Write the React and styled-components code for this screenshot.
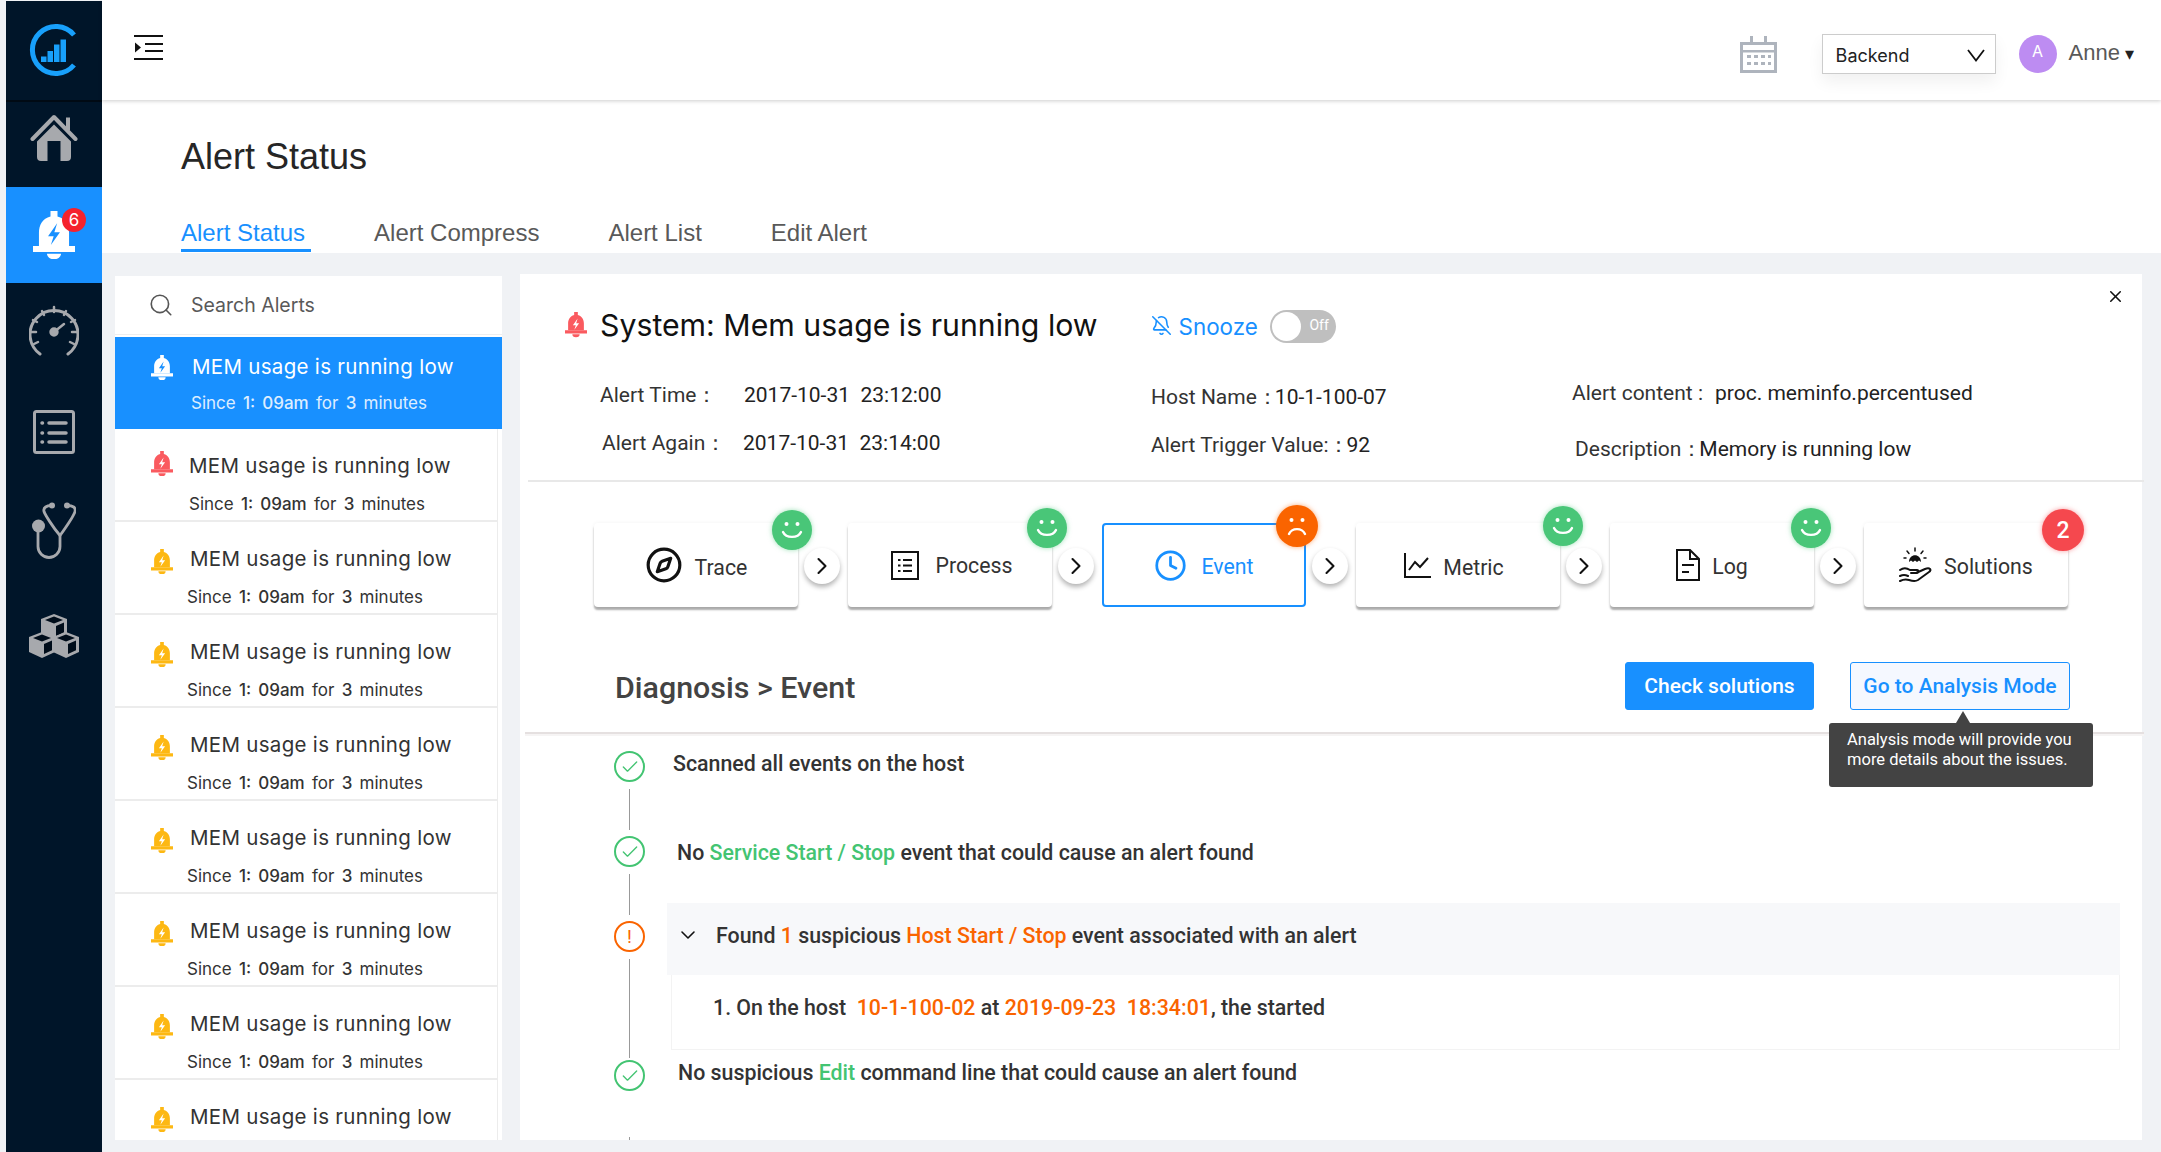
import React from 'react';
import styled, { createGlobalStyle } from 'styled-components';
import { BellOff, Check, ChevronDown, ChevronRight, Clock, Compass, Search, X } from 'lucide-react';

const GlobalStyle = createGlobalStyle`
  html, body { margin: 0; padding: 0; background: #f0f2f5; }
  * { box-sizing: border-box; }
  #root { width: 2161px; height: 1152px; overflow: hidden; }
`;

const Page = styled.div`
  display: flex;
  width: 2161px;
  height: 1152px;
  padding: 1px 0 0 6px;
  background: #f0f2f5;
  font-family: Roboto, "Liberation Sans", sans-serif;
  color: #333;
  overflow: hidden;
`;

const Sidebar = styled.nav`
  display: flex;
  flex-direction: column;
  flex: none;
  width: 96px;
  background: #001529;
`;

const LogoCell = styled.div`
  display: flex;
  align-items: center;
  justify-content: center;
  height: 101px;
  padding: 0 2px 2px 0;
  border-bottom: 2px solid #000a14;
`;

const NavCell = styled.div`
  position: relative;
  display: flex;
  align-items: center;
  justify-content: center;
  height: ${(p) => p.$h}px;
  padding-bottom: ${(p) => p.$pb || 0}px;
  background: ${(p) => (p.$active ? '#1890ff' : 'transparent')};
`;

const NavBadge = styled.span`
  position: absolute;
  top: 21px;
  left: 56px;
  display: flex;
  align-items: center;
  justify-content: center;
  width: 24px;
  height: 24px;
  border-radius: 50%;
  background: #f5222d;
  color: #fff;
  font-size: 17px;
  font-family: Inter, sans-serif;
`;

const Main = styled.div`
  display: flex;
  flex-direction: column;
  flex: 1;
  min-width: 0;
  margin-top: -1px;
`;

const Header = styled.header`
  position: relative;
  z-index: 2;
  display: flex;
  align-items: center;
  flex: none;
  height: 100px;
  padding: 0 27px 6px 32px;
  background: #fff;
  box-shadow: 0 1px 4px rgba(0, 0, 0, 0.2);
`;

const HeaderRight = styled.div`
  display: flex;
  align-items: center;
  margin: 14px 0 0 auto;
`;

const Select = styled.div`
  display: flex;
  align-items: center;
  justify-content: space-between;
  width: 174px;
  height: 40px;
  margin-left: 45px;
  padding: 3px 10px 0 13px;
  border: 1px solid #ccc;
  background: #fff;
  box-shadow: 0 8px 16px rgba(0, 0, 0, 0.06);
  color: #222;
  font-family: Inter, sans-serif;
  font-size: 18px;
`;

const Avatar = styled.div`
  display: flex;
  align-items: center;
  justify-content: center;
  width: 38px;
  height: 38px;
  margin-left: 23px;
  padding-bottom: 6px;
  border-radius: 50%;
  background: #bd8cf2;
  color: #fff;
  font-family: Inter, sans-serif;
  font-size: 16px;
`;

const UserName = styled.div`
  margin: -2px 0 0 12px;
  color: #595959;
  font-family: "Liberation Sans", sans-serif;
  font-size: 22px;
`;

const Caret = styled.span`
  margin: -2px 0 0 5px;
  color: #222;
  font-size: 18px;
`;

const PageHead = styled.div`
  flex: none;
  height: 153px;
  padding: 35px 0 0 79px;
  background: #fff;
`;

const PageTitle = styled.h1`
  margin: 0;
  color: #262626;
  font-family: "Liberation Sans", sans-serif;
  font-size: 36px;
  font-weight: 400;
  line-height: 44px;
`;

const Tabs = styled.div`
  display: flex;
  gap: 63px;
  margin-top: 38px;
`;

const Tab = styled.div`
  height: 35px;
  padding-right: 6px;
  border-bottom: 3px solid ${(p) => (p.$active ? '#1890ff' : 'transparent')};
  color: ${(p) => (p.$active ? '#1890ff' : '#595959')};
  font-family: "Liberation Sans", sans-serif;
  font-size: 24px;
  line-height: 32px;
`;

const Content = styled.div`
  display: flex;
  flex: 1;
  min-height: 0;
  gap: 18px;
  padding: 21px 19px 12px 13px;
`;

const ListPanel = styled.aside`
  display: flex;
  flex-direction: column;
  flex: none;
  width: 387px;
  margin-top: 2px;
  background: #fff;
  overflow: hidden;
`;

const SearchBox = styled.div`
  display: flex;
  align-items: center;
  flex: none;
  height: 58px;
  margin-bottom: 3px;
  padding: 0 0 0 33px;
  box-shadow: 0 1px 0 #eee;
  color: #595959;
  font-family: Inter, sans-serif;
  font-size: 19.5px;
`;

const SearchLabel = styled.span`
  margin: 0 0 0 17px;
`;

const Item = styled.div`
  display: grid;
  grid-template-columns: 22px 1fr;
  flex: none;
  height: ${(p) => (p.$active ? 92 : 93)}px;
  margin-right: ${(p) => (p.$active ? 0 : 4)}px;
  padding: ${(p) => (p.$active ? 16 : 23)}px 0 0 36px;
  background: ${(p) => (p.$active ? '#1890ff' : '#fff')};
  border-right: ${(p) => (p.$active ? 'none' : '1px solid #ececec')};
  border-bottom: ${(p) => (p.$active ? 'none' : '2px solid #ececec')};
  color: ${(p) => (p.$active ? '#fff' : '#333')};
  font-family: Inter, sans-serif;
`;

const ItemIcon = styled.div`
  margin-top: ${(p) => p.$top}px;
`;

const ItemTitle = styled.div`
  margin-left: ${(p) => p.$x}px;
  font-size: 20.5px;
  line-height: 28px;
  letter-spacing: 0.3px;
  white-space: nowrap;
`;

const ItemSub = styled.div`
  margin: ${(p) => (p.$active ? 10 : 12)}px 0 0 ${(p) => p.$x}px;
  font-size: 17px;
  line-height: 24px;
  word-spacing: 2.5px;
  white-space: nowrap;
  opacity: ${(p) => (p.$active ? 0.85 : 1)};

  b {
    font-weight: 500;
  }
`;

const Panel = styled.section`
  position: relative;
  flex: 1;
  min-width: 0;
  background: #fff;
`;

const CloseBtn = styled.div`
  position: absolute;
  top: 13px;
  right: 17px;
  color: #111;
`;

const Summary = styled.div`
  height: 208px;
  margin: 0 -2px 0 8px;
  padding: 31px 0 0 37px;
  border-bottom: 2px solid #e8e8e8;
`;

const TitleRow = styled.div`
  display: flex;
  align-items: center;
  height: 40px;
`;

const AlertTitle = styled.h2`
  margin: 0 53px 0 13px;
  color: #111;
  font-family: Inter, sans-serif;
  font-size: 30.25px;
  font-weight: 400;
  white-space: nowrap;
`;

const Snooze = styled.span`
  margin: 3px 12px 0 7px;
  color: #1890ff;
  font-family: Inter, sans-serif;
  font-size: 22.4px;
`;

const Toggle = styled.div`
  position: relative;
  width: 66px;
  height: 33px;
  margin-top: 3px;
  padding: 7px 7px 0 0;
  border-radius: 17px;
  background: #bfbfbf;
  color: #fff;
  font-size: 14px;
  text-align: right;

  &::before {
    content: '';
    position: absolute;
    top: 2px;
    left: 2px;
    width: 29px;
    height: 29px;
    border-radius: 50%;
    background: #fff;
  }
`;

const Details = styled.div`
  display: flex;
  margin: 35px 0 0 35px;
`;

const DetailCol = styled.div`
  display: flex;
  flex-direction: column;
  gap: ${(p) => p.$gap}px;
  width: ${(p) => p.$w}px;
  margin-top: ${(p) => p.$top}px;
  font-size: 21px;
  line-height: 30px;
  white-space: nowrap;
  color: #222;
`;

const DetailRow = styled.div`
  display: flex;
  margin-left: ${(p) => p.$x || 0}px;
`;

const DetailLabel = styled.span`
  flex: none;
  width: ${(p) => (p.$w ? `${p.$w}px` : 'auto')};
  margin-right: ${(p) => (p.$w ? 0 : -3)}px;
  color: #333;
`;

const Steps = styled.div`
  display: flex;
  margin: 41px 0 0 74px;
`;

const StepCard = styled.div`
  position: relative;
  display: flex;
  align-items: center;
  justify-content: center;
  gap: ${(p) => p.$gap || 12}px;
  flex: none;
  width: 204px;
  height: 84px;
  padding: 0 ${(p) => p.$shift || 0}px 0 ${(p) => p.$push || 0}px;
  border: ${(p) => (p.$active ? '2px solid #1890ff' : 'none')};
  border-radius: 4px;
  background: #fff;
  box-shadow: ${(p) => (p.$active ? 'none' : '0 3px 2px rgba(0, 0, 0, 0.32), 0 0 4px rgba(0, 0, 0, 0.05)')};
  color: ${(p) => (p.$active ? '#1890ff' : '#333')};
  font-size: 21.3px;
`;

const StepLabel = styled.span`
  margin-top: ${(p) => p.$top}px;
`;

const StepBadge = styled.div`
  position: absolute;
  top: ${(p) => p.$top}px;
  right: ${(p) => p.$right}px;
  display: flex;
  align-items: center;
  justify-content: center;
  width: ${(p) => p.$size}px;
  height: ${(p) => p.$size}px;
  border-radius: 50%;
  background: ${(p) => p.$color};
  box-shadow: 0 0 5px ${(p) => p.$color}88;
  color: #fff;
  font-size: 23px;
  font-weight: 500;
`;

const Arrow = styled.div`
  display: flex;
  align-items: center;
  justify-content: center;
  flex: none;
  width: 36px;
  height: 36px;
  margin: 25px 8px 0 6px;
  border-radius: 50%;
  background: #fff;
  box-shadow: 0 3px 5px rgba(0, 0, 0, 0.3);
  color: #111;
  z-index: 1;
`;

const DiagRow = styled.div`
  display: flex;
  align-items: center;
  height: 71px;
  margin: 56px -2px 0 5px;
  padding: 0 74px 23px 90px;
  border-bottom: 2px solid #e5e0e0;
  box-shadow: 0 2px 0 #f6f4f4;
`;

const DiagTitle = styled.h3`
  margin: 2px auto 0 0;
  color: #434343;
  font-size: 30.4px;
  font-weight: 500;
`;

const Button = styled.div`
  position: relative;
  display: flex;
  align-items: center;
  justify-content: center;
  width: ${(p) => p.$w}px;
  height: 48px;
  margin-left: ${(p) => p.$ml}px;
  border: 1px solid #1890ff;
  border-radius: 3px;
  background: ${(p) => (p.$primary ? '#1890ff' : '#f5f8ff')};
  color: ${(p) => (p.$primary ? '#fff' : '#1890ff')};
  font-size: 21px;
  font-weight: 500;
  white-space: nowrap;
`;

const Tooltip = styled.div`
  position: absolute;
  top: 60px;
  left: -22px;
  z-index: 3;
  width: 264px;
  height: 64px;
  padding: 7px 0 0 18px;
  border-radius: 3px;
  background: #434343;
  color: #fff;
  font-size: 16.5px;
  font-weight: 400;
  line-height: 19.5px;

  &::before {
    content: '';
    position: absolute;
    top: -12px;
    left: 127px;
    border-left: 7px solid transparent;
    border-right: 7px solid transparent;
    border-bottom: 12px solid #434343;
  }
`;

const Timeline = styled.div`
  margin: 17px 22px 0 94px;
`;

const Step = styled.div`
  display: flex;
  height: ${(p) => p.$h}px;
`;

const Rail = styled.div`
  display: flex;
  flex-direction: column;
  align-items: center;
  flex: none;
  width: 31px;
`;

const Connector = styled.div`
  width: 1px;
  height: ${(p) => p.$h}px;
  margin-top: ${(p) => p.$gap || 7}px;
  background: #999;
`;

const StatusRing = styled.div`
  display: flex;
  align-items: center;
  justify-content: center;
  flex: none;
  width: 31px;
  height: 31px;
  border: 2px solid ${(p) => p.$color};
  border-radius: 50%;
  color: ${(p) => p.$color};
  font-size: 19px;
`;

const StepText = styled.div`
  margin: ${(p) => p.$top}px 0 0 ${(p) => p.$x}px;
  color: #333;
  font-size: 21.35px;
  font-weight: 500;
  line-height: 26px;
  white-space: nowrap;
`;

const Green = styled.span`
  color: #43c472;
`;

const Orange = styled.span`
  color: #fa6400;
`;

const Expand = styled.div`
  flex: 1;
  margin: -18px 0 0 22px;
`;

const ExpandHead = styled.div`
  display: flex;
  align-items: center;
  height: 72px;
  padding: 0 0 8px 9px;
  background: #f7f8fa;
  font-size: 21.35px;
  font-weight: 500;
  white-space: nowrap;
`;

const ExpandHeadText = styled.span`
  margin-left: 16px;
`;

const ExpandBody = styled.div`
  height: 75px;
  margin-left: 4px;
  padding: 20px 0 0 41px;
  border: 1px solid #f3f3f3;
  border-top: none;
  font-size: 21.35px;
  font-weight: 500;
  line-height: 26px;
  white-space: nowrap;
`;

const Logo = () => (
  <svg width="52" height="54" viewBox="0 0 52 54" fill="none">
    <path d="M47 12A23.500 23.500 0 1 0 47 42" stroke="#18a0fb" strokeWidth="5" />
    <path d="M14 33.500h5.500V39H14zM20.500 28H26v11h-5.500zM27 21.500h5.500V39H27zM33.500 16.500H39V39h-5.500z" fill="#18a0fb" />
  </svg>
);

const HomeIcon = () => (
  <svg width="48" height="48" viewBox="0 0 48 48" fill="#a7a9ad">
    <path d="M2.500 25L24 3l21.500 22" fill="none" stroke="#a7a9ad" strokeWidth="4" strokeLinecap="round" strokeLinejoin="round" />
    <path d="M36 3.500h4V16h-4z" />
    <path d="M24 10.500L7 27.500V43a4 4 0 0 0 4 4h6.500V27h13v20H37a4 4 0 0 0 4-4V27.500z" />
  </svg>
);

const BellIcon = ({ size = 24, color = '#fff', bolt = '#1890ff' }) => (
  <svg width={size} height={size * 1.15} viewBox="0 0 24 27.6">
    <path d="M10 0h4v3.200c4.600 1.200 6.600 5 6.600 9.300V20H3.400v-7.500C3.400 8.200 5.400 4.400 10 3.200z" fill={color} />
    <path d="M0 20h24v3.400H0zM8 24.400h8a4 3.200 0 0 1-8 0z" fill={color} />
    <path d="M13.800 7L8.600 14.400h3.200l-1.600 5 5.200-7.200h-3.200z" fill={bolt} />
  </svg>
);

const GaugeIcon = () => (
  <svg width="50" height="52" viewBox="0 0 50 52" fill="none" stroke="#a7a9ad" strokeWidth="3" strokeLinecap="round">
    <path d="M11 50A24 24 0 1 1 39 50" />
    <path d="M25 3v5M13 7l2 4M4 16l4 2M2 28h5M5 40l4-2M37 7l-2 4M46 16l-4 2M48 28h-5M45 40l-4-2" strokeWidth="2.500" />
    <path d="M25 28l10-8" strokeWidth="2.500" />
    <circle cx="25" cy="28" r="3.200" fill="#a7a9ad" />
  </svg>
);

const ListIcon = () => (
  <svg width="42" height="44" viewBox="0 0 42 44" fill="none" stroke="#a7a9ad" strokeWidth="3" strokeLinecap="round">
    <rect x="1.500" y="1.500" width="39" height="41" rx="2" />
    <path d="M16 13h17M16 23h17M16 32h17" strokeWidth="3.500" />
    <path d="M9 13h.5M9 23h.5M9 32h.5" strokeWidth="3.500" />
  </svg>
);

const StethIcon = () => (
  <svg width="44" height="57" viewBox="0 0 44 57" fill="none" stroke="#a7a9ad" strokeWidth="2.800" strokeLinecap="round">
    <path d="M19 3.500c-4 0-8 2-7 6 1 3 9 16 16 24 5-7 14-20 15-24 1-4-2-6-8-6" />
    <path d="M28 33v11.500a11 11 0 0 1-22 0V25" />
    <circle cx="6.500" cy="24" r="6.500" fill="#a7a9ad" stroke="none" />
    <circle cx="20" cy="3.500" r="3" fill="#a7a9ad" stroke="none" />
    <circle cx="35" cy="3.500" r="3" fill="#a7a9ad" stroke="none" />
  </svg>
);

const Cube = ({ x, y }) => (
  <g transform={`translate(${x} ${y})`}>
    <path d="M13 0l13 5v15l-13 6-13-6V5z" fill="#a7a9ad" />
    <path d="M13 2.500L22 6l-9 3.600L4 6z" fill="#000d1a" />
    <path d="M15 12l8-3.400v9.600L15 22z" fill="#000d1a" />
  </g>
);

const BoxesIcon = () => (
  <svg width="50" height="44" viewBox="0 0 50 44">
    <Cube x={12} y={0} />
    <Cube x={0} y={18} />
    <Cube x={24} y={18} />
  </svg>
);

const MenuIcon = () => (
  <svg width="29" height="25" viewBox="0 0 29 25" fill="#111">
    <path d="M0 0h29v2H0zM0 23h29v2H0zM11 8h18v2H11zM11 15h18v2H11z" />
    <path d="M1 7.500l6 5-6 5z" />
  </svg>
);

const CalendarIcon = () => (
  <svg width="37" height="37" viewBox="0 0 37 37" fill="#aeb4bd">
    <path d="M0 6h10V0h3v6h11V0h3v6h10v31H0zM3 9v25h31V9z" />
    <path d="M3 14h31v2.500H3z" />
    <path d="M7 19h4v3H7zM14 19h4v3h-4zM21 19h4v3h-4zM28 19h3v3h-3zM7 26h4v3H7zM14 26h4v3h-4zM21 26h4v3h-4zM28 26h3v3h-3z" />
  </svg>
);

const SelectChevron = () => (
  <svg width="18" height="13" viewBox="0 0 18 13" fill="none" stroke="#111" strokeWidth="1.800">
    <path d="M1 1l8 10.500L17 1" />
  </svg>
);

const ProcessIcon = () => (
  <svg width="28" height="29" viewBox="0 0 28 29" fill="none" stroke="#111" strokeWidth="2">
    <rect x="1" y="1" width="26" height="27" />
    <path d="M12 9h9M12 14.500h9M12 20h9M7 9h2.500M7 14.500h2.500M7 20h2.500" />
  </svg>
);

const MetricIcon = () => (
  <svg width="27" height="25" viewBox="0 0 27 25" fill="none" stroke="#111" strokeWidth="2">
    <path d="M1 0v24h26" />
    <path d="M5 17l6-8 5 5 8-9" />
  </svg>
);

const LogIcon = () => (
  <svg width="24" height="32" viewBox="0 0 24 32" fill="none" stroke="#111" strokeWidth="2">
    <path d="M1 1h13l9 9v21H1z" />
    <path d="M14 1v9h9M6 16h12M6 23h7" />
  </svg>
);

const SolutionIcon = () => (
  <svg width="33" height="36" viewBox="0 0 33 36" fill="none" stroke="#111" strokeWidth="2" strokeLinecap="round">
    <path d="M10 15c0-9 12-9 12 0l-2-1.500-2 1.500-2-1.500-2 1.500-2-1.500z" fill="#111" stroke="none" />
    <path d="M16 1v3M8 4l2 2.500M24 4l-2 2.500M5 11h2M27 11h-2" strokeWidth="1.500" />
    <path d="M1 23c4-3 7-2 10 0h7c2 0 2 3-1 3h-5" />
    <path d="M17 26l9-4c5-2 7 1 4 3l-11 8c-3 2-6 1-9 0-3-.8-6-.5-9 1" />
    <path d="M1 29c3-1.500 6-1 8 0" />
  </svg>
);

const Face = ({ sad }) => (
  <svg width="26" height="26" viewBox="0 0 26 26" fill="none" stroke="#fff" strokeWidth="2.400" strokeLinecap="round">
    <circle cx="7.500" cy="7" r="2" fill="#fff" stroke="none" />
    <circle cx="18.500" cy="7" r="2" fill="#fff" stroke="none" />
    {sad ? <path d="M5 21c3-6.500 13-6.500 16 0" /> : <path d="M4 15c3 6.500 15 6.500 18 0" />}
  </svg>
);

const yellow = { color: '#fdb813', bolt: '#fff', iconTop: 4, titleX: 17, subX: 14 };

const items = [
  { color: '#fff', bolt: '#1890ff', active: true, iconTop: 2, titleX: 19, subX: 18 },
  { color: '#fa5a5f', bolt: '#fff', iconTop: -1, titleX: 16, subX: 16 },
  yellow, yellow, yellow, yellow, yellow, yellow,
  { ...yellow, noSub: true },
];

const GREEN = '#49c678';

const steps = [
  { label: 'Trace', labelTop: 4, icon: <Compass size={38} color="#111" strokeWidth={2} />, badge: { top: -13, right: -14, color: GREEN } },
  { label: 'Process', labelTop: 1, push: 4, icon: <ProcessIcon />, gap: 16, badge: { top: -15, right: -15, color: GREEN } },
  { label: 'Event', labelTop: 2, active: true, icon: <Clock size={33} color="#1890ff" strokeWidth={2} />, gap: 14, badge: { top: -20, right: -14, color: '#fa6400', sad: true, size: 42 } },
  { label: 'Metric', labelTop: 5, shift: 8, icon: <MetricIcon />, badge: { top: -17, right: -23, color: GREEN } },
  { label: 'Log', labelTop: 2, icon: <LogIcon />, badge: { top: -15, right: -17, color: GREEN } },
  { label: 'Solutions', labelTop: 2, icon: <SolutionIcon />, badge: { top: -14, right: -16, color: '#f5484e', text: '2', size: 42 } },
];

const CheckRing = () => (
  <StatusRing $color="#43c472">
    <Check size={20} strokeWidth={1.6} />
  </StatusRing>
);

export default function App() {
  return (
    <Page>
      <GlobalStyle />
      <Sidebar>
        <LogoCell>
          <Logo />
        </LogoCell>
        <NavCell $h={85} $pb={14}><HomeIcon /></NavCell>
        <NavCell $h={96} $active>
          <BellIcon size={42} />
          <NavBadge>6</NavBadge>
        </NavCell>
        <NavCell $h={94}><GaugeIcon /></NavCell>
        <NavCell $h={110}><ListIcon /></NavCell>
        <NavCell $h={86}><StethIcon /></NavCell>
        <NavCell $h={126}><BoxesIcon /></NavCell>
      </Sidebar>

      <Main>
        <Header>
          <MenuIcon />
          <HeaderRight>
            <CalendarIcon />
            <Select>
              Backend
              <SelectChevron />
            </Select>
            <Avatar>A</Avatar>
            <UserName>Anne</UserName>
            <Caret>▾</Caret>
          </HeaderRight>
        </Header>

        <PageHead>
          <PageTitle>Alert Status</PageTitle>
          <Tabs>
            <Tab $active>Alert Status</Tab>
            <Tab>Alert Compress</Tab>
            <Tab>Alert List</Tab>
            <Tab>Edit Alert</Tab>
          </Tabs>
        </PageHead>

        <Content>
          <ListPanel>
            <SearchBox>
              <Search size={26} strokeWidth={1.5} color="#555" />
              <SearchLabel>Search Alerts</SearchLabel>
            </SearchBox>
            {items.map((item, i) => (
              <Item key={i} $active={item.active}>
                <ItemIcon $top={item.iconTop}>
                  <BellIcon size={22} color={item.color} bolt={item.bolt} />
                </ItemIcon>
                <div>
                  <ItemTitle $x={item.titleX}>MEM usage is running low</ItemTitle>
                  {!item.noSub && (
                    <ItemSub $x={item.subX} $active={item.active}>
                      Since <b>1: 09am</b> for <b>3</b> minutes
                    </ItemSub>
                  )}
                </div>
              </Item>
            ))}
          </ListPanel>

          <Panel>
            <CloseBtn><X size={19} strokeWidth={2} /></CloseBtn>
            <Summary>
              <TitleRow>
                <BellIcon size={22} color="#fa5a5f" bolt="#fff" />
                <AlertTitle>System: Mem usage is running low</AlertTitle>
                <BellOff size={21} color="#1890ff" strokeWidth={1.8} />
                <Snooze>Snooze</Snooze>
                <Toggle>Off</Toggle>
              </TitleRow>
              <Details>
                <DetailCol $w={551} $gap={18} $top={0}>
                  <DetailRow><DetailLabel $w={144}>Alert Time：</DetailLabel>2017-10-31&nbsp; 23:12:00</DetailRow>
                  <DetailRow $x={2}><DetailLabel $w={141}>Alert Again：</DetailLabel>2017-10-31&nbsp; 23:14:00</DetailRow>
                </DetailCol>
                <DetailCol $w={421} $gap={18} $top={2}>
                  <DetailRow><DetailLabel>Host Name：</DetailLabel>10-1-100-07</DetailRow>
                  <DetailRow><DetailLabel>Alert Trigger Value:：</DetailLabel>92</DetailRow>
                </DetailCol>
                <DetailCol $w={420} $gap={26} $top={-2}>
                  <DetailRow><DetailLabel $w={143}>Alert content :</DetailLabel>proc. meminfo.percentused</DetailRow>
                  <DetailRow $x={3}><DetailLabel>Description：</DetailLabel>Memory is running low</DetailRow>
                </DetailCol>
              </Details>
            </Summary>

            <Steps>
              {steps.map((step, i) => (
                <React.Fragment key={step.label}>
                  <StepCard $active={step.active} $gap={step.gap} $shift={step.shift} $push={step.push}>
                    {step.icon}
                    <StepLabel $top={step.labelTop}>{step.label}</StepLabel>
                    <StepBadge
                      $top={step.badge.top}
                      $right={step.badge.right}
                      $color={step.badge.color}
                      $size={step.badge.size || 40}
                    >
                      {step.badge.text || <Face sad={step.badge.sad} />}
                    </StepBadge>
                  </StepCard>
                  {i < steps.length - 1 && (
                    <Arrow><ChevronRight size={28} strokeWidth={1.8} /></Arrow>
                  )}
                </React.Fragment>
              ))}
            </Steps>

            <DiagRow>
              <DiagTitle>Diagnosis &gt; Event</DiagTitle>
              <Button $primary $w={189} $ml={0}>Check solutions</Button>
              <Button $w={220} $ml={36}>
                Go to Analysis Mode
                <Tooltip>Analysis mode will provide you<br />more details about the issues.</Tooltip>
              </Button>
            </DiagRow>

            <Timeline>
              <Step $h={85}>
                <Rail><CheckRing /><Connector $h={41} /></Rail>
                <StepText $top={0} $x={28}>Scanned all events on the host</StepText>
              </Step>
              <Step $h={85}>
                <Rail><CheckRing /><Connector $h={41} /></Rail>
                <StepText $top={4} $x={32}>No <Green>Service Start / Stop</Green> event that could cause an alert found</StepText>
              </Step>
              <Step $h={139}>
                <Rail>
                  <StatusRing $color="#fa6400">!</StatusRing>
                  <Connector $h={99} />
                </Rail>
                <Expand>
                  <ExpandHead>
                    <ChevronDown size={24} strokeWidth={1.6} color="#111" />
                    <ExpandHeadText>Found <Orange>1</Orange> suspicious <Orange>Host Start / Stop</Orange> event associated with an alert</ExpandHeadText>
                  </ExpandHead>
                  <ExpandBody>1. On the host&nbsp; <Orange>10-1-100-02</Orange> at <Orange>2019-09-23&nbsp; 18:34:01</Orange>, the started</ExpandBody>
                </Expand>
              </Step>
              <Step $h={80}>
                <Rail><CheckRing /><Connector $h={4} $gap={46} /></Rail>
                <StepText $top={0} $x={33}>No suspicious <Green>Edit</Green> command line that could cause an alert found</StepText>
              </Step>
            </Timeline>
          </Panel>
        </Content>
      </Main>
    </Page>
  );
}
